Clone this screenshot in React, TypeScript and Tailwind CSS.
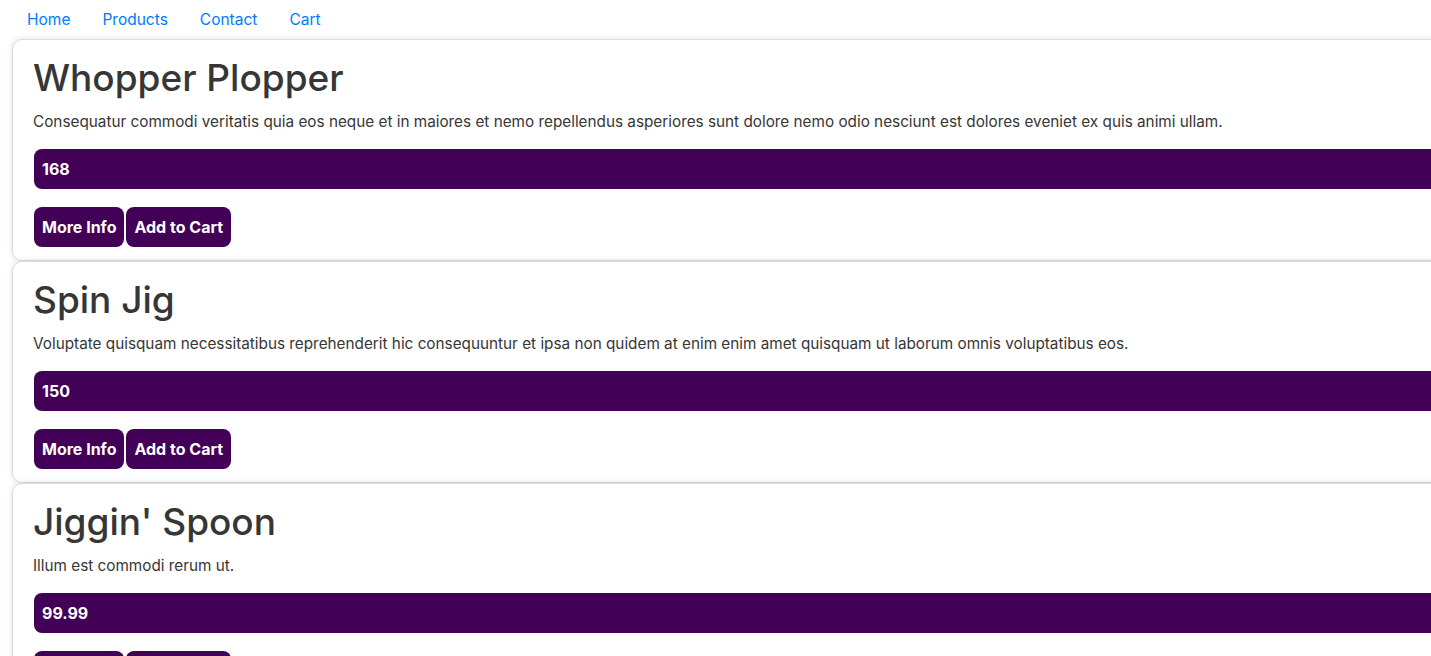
const products = [
  {
    name: "Whopper Plopper",
    description:
      "Consequatur commodi veritatis quia eos neque et in maiores et nemo repellendus asperiores sunt dolore nemo odio nesciunt est dolores eveniet ex quis animi ullam.",
    price: "168",
  },
  {
    name: "Spin Jig",
    description:
      "Voluptate quisquam necessitatibus reprehenderit hic consequuntur et ipsa non quidem at enim enim amet quisquam ut laborum omnis voluptatibus eos.",
    price: "150",
  },
  {
    name: "Jiggin' Spoon",
    description: "Illum est commodi rerum ut.",
    price: "99.99",
  },
];

export default function App() {
  return (
    <div className="h-[656px] overflow-hidden bg-white font-['Inter',sans-serif] text-[#333]">
      <nav className="flex h-[39px] items-center pl-[11px]">
        {["Home", "Products", "Contact", "Cart"].map((link) => (
          <a key={link} href="#" className="px-4 text-[15.5px] text-[#007bff]">
            {link}
          </a>
        ))}
      </nav>

      <div className="ml-3 w-[1460px]">
        {products.map((p) => (
          <div
            key={p.name}
            className="h-[222px] rounded-[10px] border border-[#dcdcdc] bg-white px-5 pt-[14px] shadow-[0_0_6px_rgba(0,0,0,0.12)]"
          >
            <h2 className="text-[37px] leading-[48px] font-medium text-[#363636]">{p.name}</h2>
            <p className="mt-[8px] text-[15.3px] leading-[24px] text-[#363636]">{p.description}</p>
            <div className="ml-px mt-[15px] flex h-10 items-center rounded-lg bg-[#420057] px-2 text-[16px] font-bold text-white">
              {p.price}
            </div>
            <div className="ml-px mt-[18px] flex gap-[2px]">
              <button className="h-10 rounded-lg bg-[#420057] px-2 text-[16px] font-bold text-white">
                More Info
              </button>
              <button className="h-10 rounded-lg bg-[#420057] px-2 text-[16px] font-bold text-white">
                Add to Cart
              </button>
            </div>
          </div>
        ))}
      </div>
    </div>
  );
}
